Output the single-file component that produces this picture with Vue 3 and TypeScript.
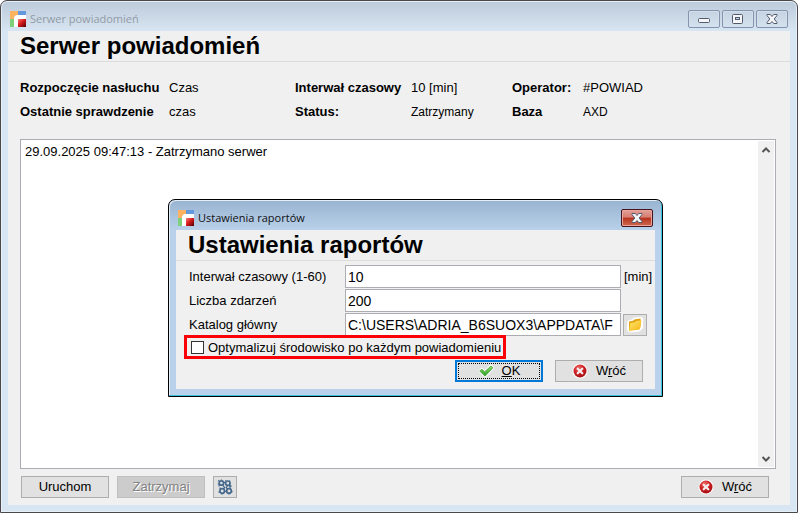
<script setup lang="ts">
import { ref } from 'vue'

interface InfoItem {
  label: string
  value: string
  small?: boolean
}

const info: InfoItem[] = [
  { label: 'Rozpoczęcie nasłuchu', value: 'Czas' },
  { label: 'Interwał czasowy', value: '10 [min]' },
  { label: 'Operator:', value: '#POWIAD' },
  { label: 'Ostatnie sprawdzenie', value: 'czas' },
  { label: 'Status:', value: 'Zatrzymany', small: true },
  { label: 'Baza', value: 'AXD', small: true },
]

const log = ref('29.09.2025 09:47:13 - Zatrzymano serwer')
const interval = ref('10')
const eventCount = ref('200')
const directory = ref('C:\\USERS\\ADRIA_B6SUOX3\\APPDATA\\F')
const optimize = ref(false)
</script>

<template>
  <svg class="defs" aria-hidden="true">
    <defs>
      <linearGradient id="red-square" x1="0" y1="0" x2="1" y2="1">
        <stop offset="0" stop-color="#f08078" />
        <stop offset="0.45" stop-color="#d81c1c" />
        <stop offset="1" stop-color="#500000" />
      </linearGradient>
      <radialGradient id="red-ball" cx="0.4" cy="0.3" r="0.75">
        <stop offset="0" stop-color="#ee7a74" />
        <stop offset="0.5" stop-color="#cf1f22" />
        <stop offset="1" stop-color="#9c0d12" />
      </radialGradient>
      <linearGradient id="folder-front" x1="0" y1="0" x2="1" y2="1">
        <stop offset="0" stop-color="#ffe873" />
        <stop offset="1" stop-color="#f5b50f" />
      </linearGradient>
      <linearGradient id="check-fill" x1="0" y1="0" x2="0" y2="1">
        <stop offset="0" stop-color="#8fdc6a" />
        <stop offset="1" stop-color="#2f9a2b" />
      </linearGradient>
      <symbol id="app-logo" viewBox="0 0 16 16">
        <path d="M0 0H8V4Q4 4 4 8H0Z" fill="#fdb261" />
        <path d="M8 0H16V4H8Z" fill="#6199dc" />
        <path d="M0 8H4V16H0Z" fill="#7ed07a" />
        <path d="M4 16V8Q4 4 8 4H16V8H8V16Z" fill="#fff" />
        <path d="M8 8H16V16H8Z" fill="url(#red-square)" />
      </symbol>
      <symbol id="cancel" viewBox="0 0 16 16">
        <circle cx="8" cy="8" r="7.5" fill="#fff" />
        <circle cx="8" cy="8" r="6.5" fill="url(#red-ball)" />
        <path d="M5.7 5.7L10.3 10.3M10.3 5.7L5.7 10.3" stroke="#f4eeee" stroke-width="2.2" stroke-linecap="round" />
      </symbol>
      <symbol id="close-mark" viewBox="0 0 12 10">
        <path d="M1 .5H4.3L6 2.5L7.7 .5H11V1.5L8.2 5L11 8.5V9.5H7.7L6 7.5L4.3 9.5H1V8.5L3.8 5L1 1.5Z" fill="#f5f6f8" stroke="#535a6e" />
      </symbol>
    </defs>
  </svg>

  <main class="window">
    <header class="titlebar">
      <svg class="logo"><use href="#app-logo" /></svg>
      <span class="caption">Serwer powiadomień</span>
      <div class="window-controls">
        <button type="button" class="control" aria-label="Minimalizuj">
          <svg width="12" height="10" viewBox="0 0 12 10"><rect x=".5" y="4.5" width="11" height="4" rx="1" fill="#f5f6f8" stroke="#535a6e" /></svg>
        </button>
        <button type="button" class="control" aria-label="Maksymalizuj">
          <svg width="12" height="10" viewBox="0 0 12 10">
            <rect x=".5" y=".5" width="10" height="9" rx="1" fill="#f5f6f8" stroke="#535a6e" />
            <rect x="3.5" y="3.5" width="4" height="2" fill="#c5d2e0" stroke="#535a6e" />
          </svg>
        </button>
        <button type="button" class="control" aria-label="Zamknij">
          <svg width="12" height="10"><use href="#close-mark" /></svg>
        </button>
      </div>
    </header>

    <section class="client">
      <h1 class="heading">Serwer powiadomień</h1>
      <div class="content">
        <dl class="info">
          <template v-for="item in info" :key="item.label">
            <dt>{{ item.label }}</dt>
            <dd :class="{ small: item.small }">{{ item.value }}</dd>
          </template>
        </dl>

        <div class="log">
          <textarea v-model="log" class="log-text" aria-label="Dziennik zdarzeń" readonly></textarea>
          <div class="scrollbar">
            <button type="button" class="arrow" aria-label="W górę">
              <svg width="10" height="8" viewBox="0 0 10 8"><path d="M1.5 6L5 2.5L8.5 6" fill="none" stroke="#555" stroke-width="2" /></svg>
            </button>
            <button type="button" class="arrow" aria-label="W dół">
              <svg width="10" height="8" viewBox="0 0 10 8"><path d="M1.5 2L5 5.5L8.5 2" fill="none" stroke="#555" stroke-width="2" /></svg>
            </button>
          </div>
        </div>

        <footer class="actions">
          <button type="button" class="button">Uruchom</button>
          <button type="button" class="button" disabled>Zatrzymaj</button>
          <button type="button" class="button square" aria-label="Ustawienia raportów">
            <svg width="16" height="16" viewBox="0 0 16 16" fill="none" stroke="#45688c" stroke-width="1.7">
              <circle cx="4.4" cy="4" r="2.2" />
              <circle cx="10.8" cy="4.2" r="2.2" />
              <circle cx="5.2" cy="12" r="2.3" />
              <circle cx="12" cy="12" r="2.3" />
              <path d="M1 1.6L2.6 2.6M4.4 .4V1.6M.8 5.2H2M6.8 3.4L8.6 3.6M5.6 6L7.6 8.4L6.4 9.8M8.4 1.4L9.4 2.4M12.6 1.4V7.2L13.4 9.6M12.4 6.2L14.6 7.4M10.6 6.6L9.2 8.6L10.6 10M7.6 12.4H9.6M2.6 8.6L3.8 10M1.4 13.2H3M5 14.4V15.6M12 14.4V15.6M14.4 12.6H15.6M2.6 6.2L1.6 7.4" stroke-width="1.2" />
            </svg>
          </button>
          <button type="button" class="button back">
            <svg class="icon"><use href="#cancel" /></svg>
            <span>W<u>r</u>óć</span>
          </button>
        </footer>
      </div>
    </section>

    <section class="dialog" role="dialog" aria-labelledby="dialog-heading">
      <header class="titlebar">
        <svg class="logo"><use href="#app-logo" /></svg>
        <span class="caption">Ustawienia raportów</span>
        <div class="window-controls">
          <button type="button" class="control close" aria-label="Zamknij okno">
            <svg width="12" height="10"><use href="#close-mark" /></svg>
          </button>
        </div>
      </header>
      <form class="client" @submit.prevent>
        <h2 id="dialog-heading" class="heading">Ustawienia raportów</h2>
        <div class="fields">
          <label for="interval">Interwał czasowy (1-60)</label>
          <input id="interval" v-model="interval" type="text" />
          <span class="unit">[min]</span>
          <label for="events">Liczba zdarzeń</label>
          <input id="events" v-model="eventCount" type="text" />
          <span></span>
          <label for="directory">Katalog główny</label>
          <input id="directory" v-model="directory" type="text" />
          <button type="button" class="button square" aria-label="Wybierz katalog">
            <svg width="16" height="16" viewBox="0 0 16 16">
              <path d="M1 4L5 3L6.5 1.2L14.5 .5L15.5 2V11L12.5 14L2.5 15L.5 13Z" fill="#fff" stroke="#fff" />
              <path d="M2 4.5L6 3.8L7.2 2.4L13.6 1.6V10L11.6 12.4L2 13.4Z" fill="#e3a214" />
              <path d="M3.4 6L8 5.2L9.2 4L14.6 3.2L12.6 12.4L2 14Z" fill="url(#folder-front)" />
            </svg>
          </button>
        </div>
        <label class="option">
          <input v-model="optimize" type="checkbox" />
          <span>Optymalizuj środowisko po każdym powiadomieniu</span>
        </label>
        <div class="dialog-actions">
          <button type="submit" class="button primary">
            <svg class="icon" viewBox="0 0 16 16">
              <path d="M1.6 8L4 6.2L6.6 8.8L13 3L15 4.8L7 13.2Z" fill="#fff" stroke="#fff" stroke-width="2.4" stroke-linejoin="round" />
              <path d="M1.6 8L4 6.2L6.6 8.8L13 3L15 4.8L7 13.2Z" fill="url(#check-fill)" stroke="#4aa83a" stroke-width=".8" />
            </svg>
            <span><u>O</u>K</span>
          </button>
          <button type="button" class="button">
            <svg class="icon"><use href="#cancel" /></svg>
            <span>W<u>r</u>óć</span>
          </button>
        </div>
      </form>
    </section>
  </main>
</template>

<style>
body {
  background: #fff;
}
</style>

<style scoped>
* {
  box-sizing: border-box;
}

.defs {
  position: absolute;
  width: 0;
  height: 0;
}

.window {
  position: relative;
  display: flex;
  flex-direction: column;
  min-height: 100vh;
  padding: 0 7px 7px;
  border: 1px solid #4b474b;
  border-radius: 7px 7px 0 0;
  background: linear-gradient(#bccada, #d8e5f2 30px);
  box-shadow: inset 0 0 0 1px #e6eef6;
  color: #000;
  font: 13px/16px "Liberation Sans", Arial, sans-serif;
}

.titlebar {
  display: flex;
  align-items: center;
  height: 30px;
  padding: 6px 2px 0;
}

.logo {
  width: 16px;
  height: 16px;
}

.caption {
  margin-left: 4px;
  color: #929ba5;
  font: 11px/16px "Open Sans", "Noto Sans", sans-serif;
}

.window-controls {
  display: flex;
  gap: 2px;
  margin-left: auto;
}

.control {
  display: flex;
  align-items: center;
  justify-content: center;
  width: 32px;
  height: 18px;
  padding: 0;
  border: 1px solid #8594ae;
  border-radius: 2px;
  background: transparent;
  box-shadow: inset 0 0 0 1px #d3dfeb;
}

.close {
  border-color: #46141c;
  background: linear-gradient(#e3a096, #d67d70 45%, #b8321c 50%, #cf6a50);
  box-shadow: inset 0 0 0 1px #e9a59b;
}

.client {
  display: flex;
  flex: 1;
  flex-direction: column;
  background: #f0f0f0;
}

.heading {
  margin: 0;
  padding: 0 12px;
  border-bottom: 1px solid #dcdcdc;
  font-size: 24px;
  font-weight: bold;
  line-height: 30px;
}

.content {
  display: flex;
  flex: 1;
  flex-direction: column;
  padding: 14px 14px 7px 12px;
}

.info {
  display: grid;
  grid-template-columns: 149px minmax(0, 126fr) 116px minmax(0, 101fr) 71px minmax(0, 193fr);
  row-gap: 8px;
  margin: 0;
  padding: 4px 0 19px;
}

.info dt {
  font-weight: bold;
}

.info dd {
  margin: 0;
}

.info .small {
  font-size: 12px;
}

.log {
  display: flex;
  flex: 1;
  padding: 1px;
  border: 1px solid #abadb3;
  background: #fff;
}

.log-text {
  flex: 1;
  padding: 3px;
  border: 0;
  outline: 0;
  background: transparent;
  color: inherit;
  font: inherit;
  resize: none;
}

.scrollbar {
  display: flex;
  flex-direction: column;
  justify-content: space-between;
  width: 16px;
  background: #f0f0f0;
}

.arrow {
  display: flex;
  align-items: center;
  justify-content: center;
  height: 17px;
  padding: 0;
  border: 0;
  background: transparent;
}

.actions {
  display: flex;
  gap: 8px;
  padding: 7px 7px 0 1px;
}

.button {
  display: flex;
  align-items: center;
  justify-content: center;
  gap: 8px;
  width: 88px;
  height: 22px;
  padding: 0;
  border: 1px solid #adadad;
  background: #e1e1e1;
  color: #000;
  font: inherit;
}

.button:disabled {
  border-color: #bfbfbf;
  background: #ccc;
  color: #838383;
  text-shadow: 1px 1px #fff;
}

.square {
  width: 24px;
}

.back {
  margin-left: auto;
}

.icon {
  width: 16px;
  height: 16px;
}

.dialog {
  position: absolute;
  top: 198px;
  left: 167px;
  width: 495px;
  padding: 0 7px 7px;
  border: 1px solid #000;
  border-radius: 7px 7px 0 0;
  background: linear-gradient(#98b3d1, #b9d1ea 30px);
  box-shadow: inset -1px -1px #38c4e0, inset 1px 1px #e4eef8;
}

.dialog .caption {
  color: #101010;
}

.fields {
  display: grid;
  grid-template-columns: 156px 1fr 32px;
  align-items: center;
  row-gap: 1px;
  padding: 4px 2px 0 13px;
}

.fields input {
  width: 100%;
  min-width: 0;
  height: 23px;
  padding: 0 2px;
  border: 1px solid #abadb3;
  outline: 0;
  background: #fff;
  color: #000;
  font: 14px/18px "Liberation Sans", Arial, sans-serif;
}

.unit {
  padding-left: 3px;
}

.fields .square {
  margin-left: 2px;
}

.option {
  position: relative;
  display: flex;
  align-items: center;
  align-self: flex-start;
  gap: 4px;
  height: 24px;
  margin: -1px 0 0 8px;
  padding: 1px 2px 0 4px;
  border: 3px solid #fb0007;
}

.option input {
  width: 13px;
  height: 13px;
  margin: 0;
  border: 1px solid #333;
  appearance: none;
  background: #fff;
}

.option input:checked {
  background: #333;
  box-shadow: inset 0 0 0 2px #fff;
}

.dialog-actions {
  display: flex;
  justify-content: flex-end;
  gap: 12px;
  padding: 1px 12px 7px;
}

.primary {
  border: 2px solid #0078d7;
  outline: 1px dotted #000;
  outline-offset: -4px;
}
</style>
